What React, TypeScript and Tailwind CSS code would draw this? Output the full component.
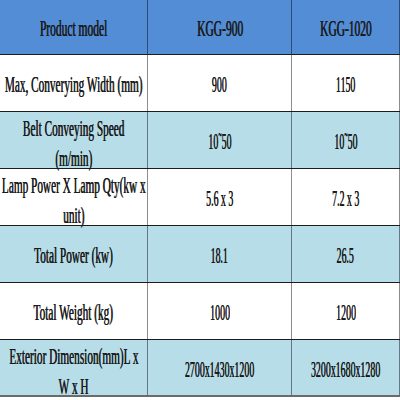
const rows: { label: string[]; a: string; b: string; tint: boolean }[] = [
  { label: ['Max, Converying Width (mm)'], a: '900', b: '1150', tint: false },
  { label: ['Belt Conveying Speed', '(m/min)'], a: '10˜50', b: '10˜50', tint: true },
  { label: ['Lamp Power X Lamp Qty(kw x', 'unit)'], a: '5.6 x 3', b: '7.2 x 3', tint: false },
  { label: ['Total Power (kw)'], a: '18.1', b: '26.5', tint: true },
  { label: ['Total Weight (kg)'], a: '1000', b: '1200', tint: false },
  { label: ['Exterior Dimension(mm)L x', 'W x H'], a: '2700x1430x1200', b: '3200x1680x1280', tint: true },
]

const kinds = {
  head: 'scale-x-[0.5] [text-shadow:0.9px_0_0_#1a1a1a]',
  label: 'scale-x-[0.49] [text-shadow:0.7px_0_0_#1a1a1a]',
  value: 'scale-x-[0.43] [text-shadow:0.5px_0_0_#1a1a1a]',
}

function Narrow({ lines, kind }: { lines: string[]; kind: keyof typeof kinds }) {
  return (
    <div className={`flex flex-col items-center gap-[4px] ${lines.length > 1 ? 'pt-2' : 'pt-1'}`}>
      {lines.map((l) => (
        <span
          key={l}
          className={`inline-block whitespace-pre font-['Liberation_Serif',serif] text-[23px] leading-[26px] text-[#1a1a1a] ${kinds[kind]}`}
        >
          {l}
        </span>
      ))}
    </div>
  )
}

function Cell({ width, children }: { width: string; children: React.ReactNode }) {
  return <div className={`${width} flex h-full items-center justify-center border-r border-black/45`}>{children}</div>
}

export default function App() {
  return (
    <div className="h-[400px] w-[400px] overflow-hidden bg-white">
      <div className="flex h-[55px] border-b border-[#1c1c1c] bg-[#538dd5]">
        <Cell width="w-[148px]"><Narrow lines={['Product model']} kind="head" /></Cell>
        <Cell width="w-[144px]"><Narrow lines={['KGG-900']} kind="head" /></Cell>
        <Cell width="w-[108px]"><Narrow lines={['KGG-1020']} kind="head" /></Cell>
      </div>
      {rows.map((r, i) => (
        <div
          key={i}
          className={`flex h-[57px] ${i === rows.length - 1 ? 'border-b-2 border-b-[#6b6b6b]' : 'border-b border-b-[#1c1c1c]'} ${r.tint ? 'bg-[#b7dde8]' : 'bg-white'}`}
        >
          <Cell width="w-[148px]"><Narrow lines={r.label} kind="label" /></Cell>
          <Cell width="w-[144px]"><Narrow lines={[r.a]} kind="value" /></Cell>
          <Cell width="w-[108px]"><Narrow lines={[r.b]} kind="value" /></Cell>
        </div>
      ))}
    </div>
  )
}
